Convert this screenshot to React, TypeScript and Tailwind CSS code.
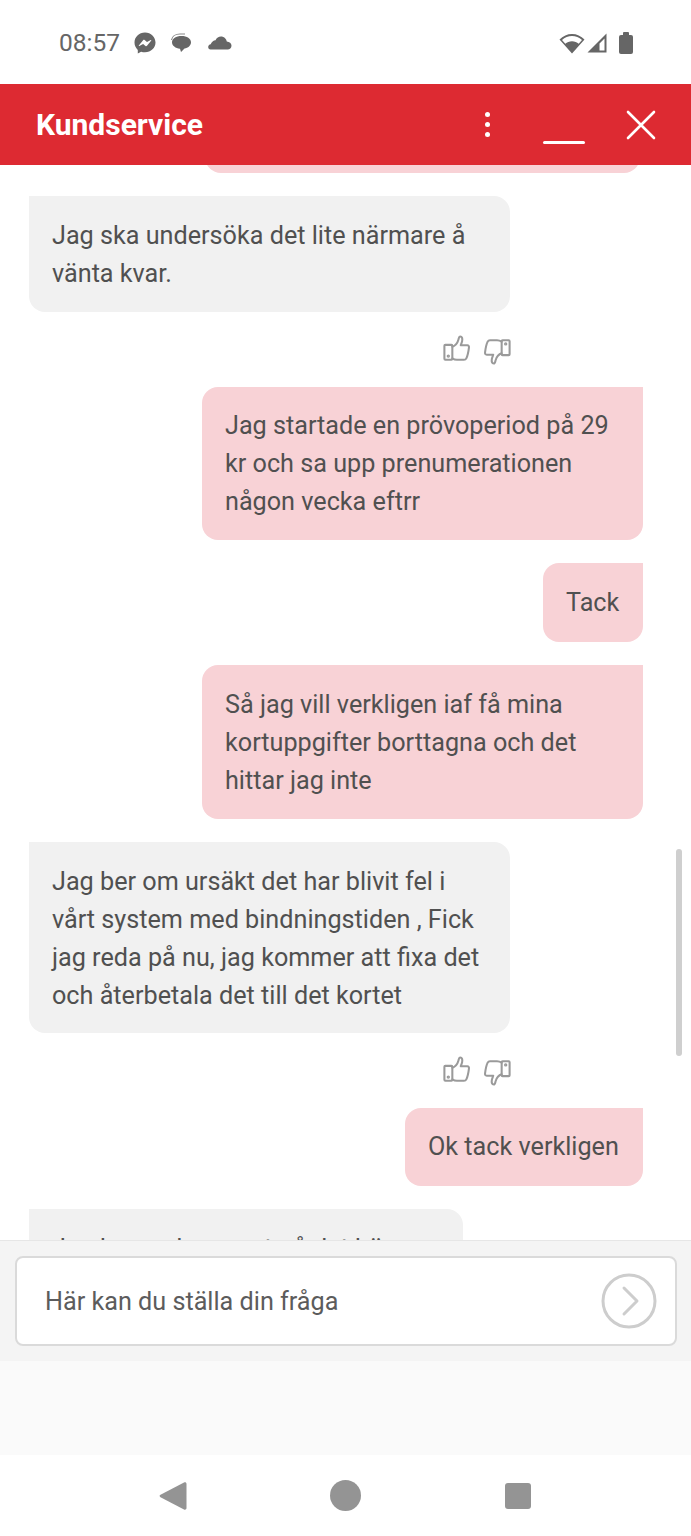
const font = { fontFamily: "Roboto, sans-serif" };

function ThumbUp({ flip }: { flip?: boolean }) {
  return (
    <svg width="28" height="32" viewBox="0 0 30 34" fill="none" stroke="#9a9a9a" strokeWidth="2.200" strokeLinejoin="round" strokeLinecap="round" className={flip ? "rotate-180" : ""}>
      <rect x="1.500" y="11.500" width="8.500" height="16" rx="1" />
      <path d="M10 13.500c3-1 5.500-4 6.500-7.500.4-1.500.6-3.500 2-3.500 2 0 2.500 2.500 2 5-.3 1.500-1 3-1.500 4.500h7c1.500 0 2 1 1.800 2.500-.5 4-1 8-2.800 11.500-.5 1-1.300 1.500-2.500 1.500H15c-2 0-3.500-.5-5-1.500" />
      <circle cx="5.700" cy="23.500" r="0.700" fill="#9a9a9a" />
    </svg>
  );
}

function Thumbs() {
  return (
    <div className="mt-[20px] mb-[19px] flex h-[36px] items-center justify-end gap-[12px] pr-[180px]">
      <ThumbUp />
      <ThumbUp flip />
    </div>
  );
}

function Lines({ lines }: { lines: string[] }) {
  return (
    <>
      {lines.map((l) => (
        <div key={l} className="whitespace-nowrap">{l}</div>
      ))}
    </>
  );
}

export default function App() {
  const text = "px-[23px] text-[25.200px] leading-[38px] text-[#505050]";
  return (
    <div style={font} className="flex h-[1536px] w-[691px] flex-col overflow-hidden bg-white">
      <div className="flex h-[84px] shrink-0 items-center justify-between pl-[59px] pr-[58px] pt-[2px] text-[#666666]">
        <div className="flex items-center">
          <span className="text-[24.500px] leading-none">08:57</span>
          <svg className="ml-[13px]" width="24" height="24" viewBox="0 0 24 24">
            <path fill="#666" d="M12 1.500C6 1.500 1.500 5.900 1.500 11.600c0 3 1.200 5.500 3.300 7.300v3.600l3.300-1.800c1.200.4 2.500.6 3.900.6 6 0 10.500-4.400 10.500-9.700S18 1.500 12 1.500z" />
            <path fill="#fff" d="M5.800 14.600l4.300-5.300c.4-.5 1-.6 1.500-.2l2.400 2 3.800-2.100c.4-.2.700.2.500.5l-4.300 5.300c-.4.500-1 .6-1.500.2l-2.400-2-3.800 2.100c-.4.200-.7-.2-.5-.5z" />
          </svg>
          <svg className="ml-[12px]" width="24" height="24" viewBox="0 0 24 24">
            <path fill="#666" d="M12.500 5c5.500 0 9.500 2.500 9.500 6.300 0 3.300-3 5.700-6.500 6.200L12 21l-1-3.300c-4.500-.3-8-3-8-6.400C3 7.500 7 5 12.500 5z" />
            <path fill="none" stroke="#888" strokeWidth="1.200" d="M2.500 9C3 5.500 6.500 3 11 3h5" />
          </svg>
          <svg className="ml-[15px]" width="24" height="18" viewBox="0 0 24 18">
            <path fill="#666" d="M2.500 15.500c-1.500 0-2.300-1-2.300-2.500s1-2.600 2.500-2.800C3.500 7.800 5.500 6.300 7.500 6.200 8.800 3.800 10.500 2.500 13 2.500c3 0 5.300 2.200 5.800 5 2.600.2 4.700 1.800 4.700 4.300 0 2.200-1.800 3.700-3.800 3.700z" />
          </svg>
        </div>
        <div className="flex items-center">
          <svg width="26" height="21" viewBox="0 0 26 21">
            <path fill="#666" fillRule="evenodd" d="M13 20.500L.5 6.500C4 3 8.300 1 13 1s9 2 12.500 5.500zM13 3C9.300 3 5.800 4.400 3 7l3.300 3.700C8 9.200 10.400 8.300 13 8.300s5 .9 6.700 2.400L23 7c-2.800-2.600-6.300-4-10-4z" />
          </svg>
          <svg className="ml-[2px]" width="20" height="20" viewBox="0 0 20 20">
            <path fill="#666" fillRule="evenodd" d="M19.500.5v19H.5zM17.500 5.500l-5 5v7h5z" />
          </svg>
          <div className="relative ml-[12px] mt-[2px] h-[19px] w-[14px] rounded-[2px] bg-[#666666]">
            <div className="absolute left-[4px] top-[-3px] h-[4px] w-[6px] rounded-t-[1px] bg-[#666666]" />
          </div>
        </div>
      </div>

      <div className="relative z-10 flex h-[81px] shrink-0 items-center bg-[#dd2a32] pl-[36px] pr-[35px] text-white">
        <span className="flex-1 text-[30px] font-bold leading-none">Kundservice</span>
        <div className="mr-[53px] flex flex-col gap-[5px]">
          <span className="h-[5px] w-[5px] rounded-full bg-white" />
          <span className="h-[5px] w-[5px] rounded-full bg-white" />
          <span className="h-[5px] w-[5px] rounded-full bg-white" />
        </div>
        <div className="mr-[41px] mt-[35px] h-[3px] w-[42px] rounded-full bg-white" />
        <svg width="30" height="30" viewBox="0 0 30 30" stroke="#fff" strokeWidth="2.600" strokeLinecap="round">
          <path d="M2 2l26 26M28 2L2 28" />
        </svg>
      </div>

      <div className="relative h-[1075px] shrink-0 overflow-hidden">
        <div className="-mt-[32px]">
          <div className="mb-[23px] ml-[205px] mr-[51px] h-[40px] rounded-[16px] bg-[#f8d2d6]" />
          <div className={`ml-[29px] h-[116px] w-[481px] rounded-[16px] rounded-tl-none bg-[#f1f1f1] pt-[21px] ${text}`}>
            <Lines lines={["Jag ska undersöka det lite närmare å", "vänta kvar."]} />
          </div>
          <Thumbs />
          <div className="mb-[23px] flex justify-end pr-[48px]">
            <div className={`h-[153px] w-[441px] rounded-[16px] rounded-tr-none bg-[#f8d2d6] pt-[20px] ${text}`}>
              <Lines lines={["Jag startade en prövoperiod på 29", "kr och sa upp prenumerationen", "någon vecka eftrr"]} />
            </div>
          </div>
          <div className="mb-[23px] flex justify-end pr-[48px]">
            <div className={`h-[79px] w-[100px] rounded-[16px] rounded-tr-none bg-[#f8d2d6] pt-[21px] ${text}`}>
              <Lines lines={["Tack"]} />
            </div>
          </div>
          <div className="mb-[23px] flex justify-end pr-[48px]">
            <div className={`h-[154px] w-[441px] rounded-[16px] rounded-tr-none bg-[#f8d2d6] pt-[21px] ${text}`}>
              <Lines lines={["Så jag vill verkligen iaf få mina", "kortuppgifter borttagna och det", "hittar jag inte"]} />
            </div>
          </div>
          <div className={`ml-[29px] h-[191px] w-[481px] rounded-[16px] rounded-tl-none bg-[#f1f1f1] pt-[21px] ${text}`}>
            <Lines lines={["Jag ber om ursäkt det har blivit fel i", "vårt system med bindningstiden , Fick", "jag reda på nu, jag kommer att fixa det", "och återbetala det till det kortet"]} />
          </div>
          <Thumbs />
          <div className="mb-[23px] flex justify-end pr-[48px]">
            <div className={`h-[78px] w-[238px] rounded-[16px] rounded-tr-none bg-[#f8d2d6] pt-[20px] ${text}`}>
              <Lines lines={["Ok tack verkligen"]} />
            </div>
          </div>
          <div className={`ml-[29px] h-[78px] w-[434px] rounded-[16px] rounded-tl-none bg-[#f1f1f1] pt-[21px] ${text}`}>
            <Lines lines={["Jag har nu besvarat på det här"]} />
          </div>
        </div>
        <div className="absolute right-[9px] top-[684px] h-[207px] w-[6px] rounded-full bg-[#cfcfcf]" />
      </div>

      <div className="flex h-[121px] shrink-0 items-start border-t border-[#e6e6e6] bg-[#f4f4f4] pl-[15px] pr-[14px] pt-[15px]">
        <div className="flex h-[90px] flex-1 items-center justify-between rounded-[8px] border-2 border-[#dadada] bg-white pl-[28px] pr-[18px]">
          <span className="pt-[2px] text-[25.200px] text-[#5c5c5c]">Här kan du ställa din fråga</span>
          <svg width="56" height="56" viewBox="0 0 56 56" fill="none" stroke="#cdcdcd" strokeWidth="3" strokeLinecap="round" strokeLinejoin="round">
            <circle cx="28" cy="28" r="26" />
            <path d="M23 15l13 13-13 13" />
          </svg>
        </div>
      </div>

      <div className="h-[94px] shrink-0 bg-[#fafafa]" />

      <div className="flex flex-1 items-center text-[#949494]">
        <svg className="ml-[159px]" width="28" height="30" viewBox="0 0 28 30">
          <path fill="#949494" d="M25 1.500c1.200-.6 2.500 0 2.500 1.500v24c0 1.500-1.300 2.100-2.500 1.500L1.500 16.200c-1.200-.7-1.200-1.700 0-2.400z" />
        </svg>
        <div className="ml-[143px] h-[31px] w-[31px] rounded-full bg-[#949494]" />
        <div className="ml-[144px] h-[26px] w-[26px] rounded-[3px] bg-[#949494]" />
      </div>
    </div>
  );
}
